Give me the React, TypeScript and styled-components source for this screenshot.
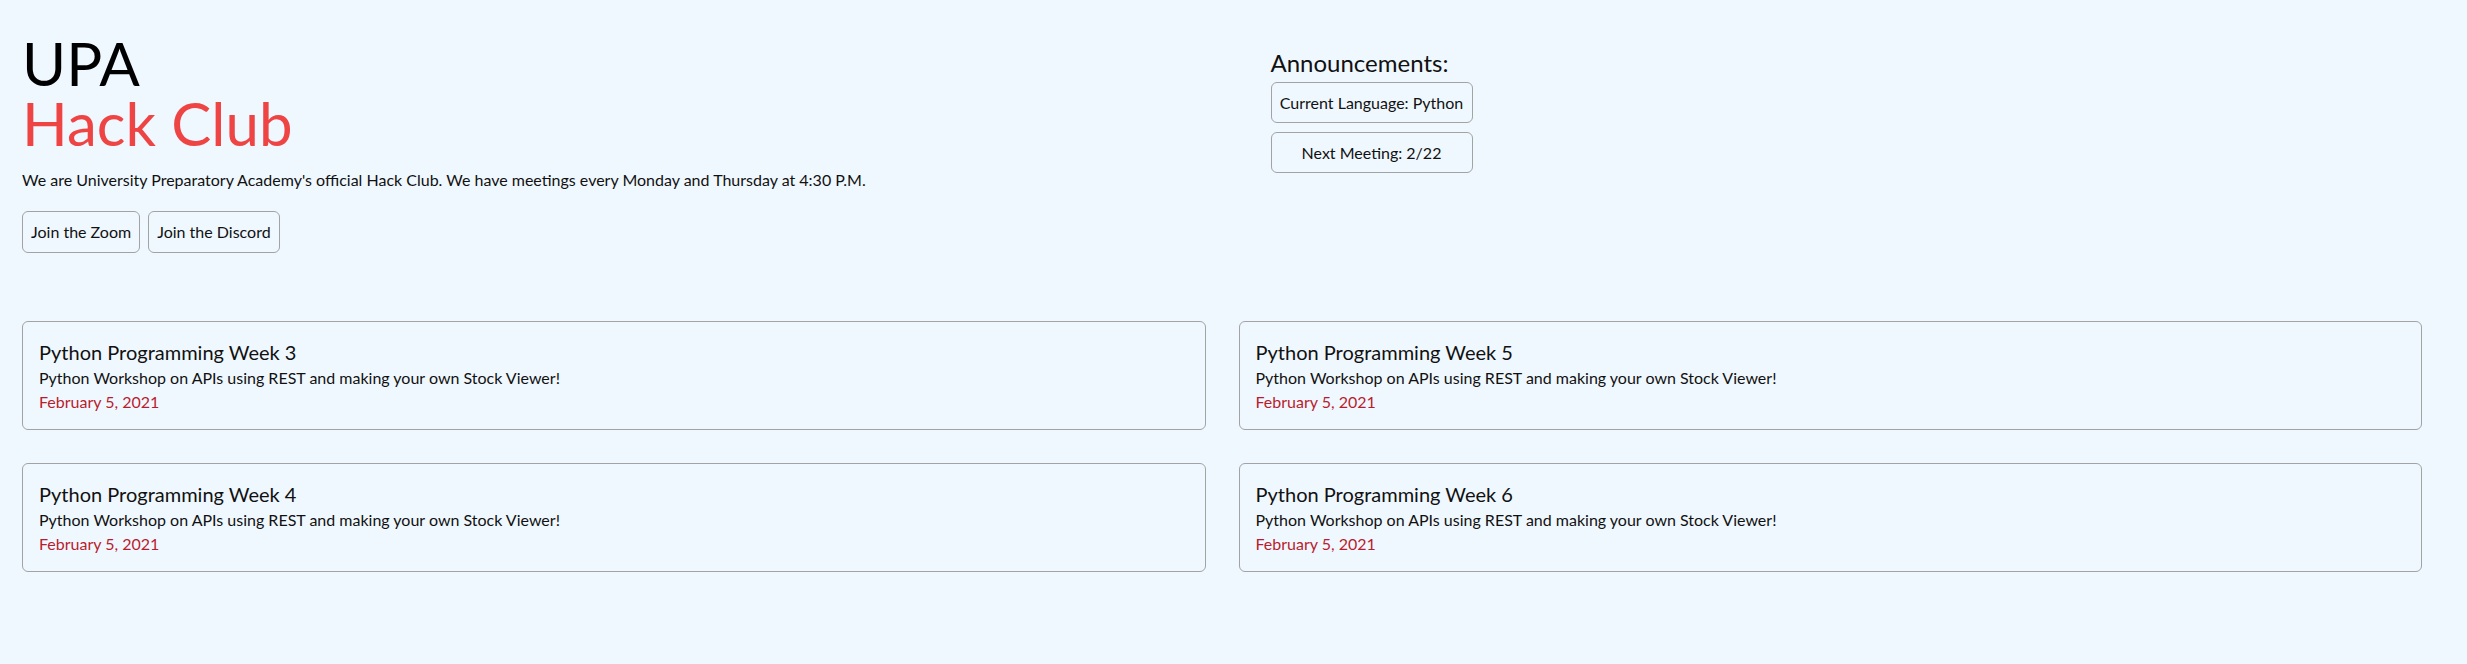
import React from "react";
import styled, { createGlobalStyle } from "styled-components";

const GlobalStyle = createGlobalStyle`
  html, body {
    margin: 0;
    padding: 0;
    background: #f0f8ff;
  }
  body {
    font-family: "Lato", "Open Sans", "Liberation Sans", sans-serif;
    color: #111;
  }
  * { box-sizing: border-box; }
`;

const Page = styled.div`
  min-height: 664px;
  background: #f0f8ff;
  padding: 33px 45px 40px 22px;
`;

const Top = styled.section`
  display: grid;
  grid-template-columns: 1fr 1fr;
  column-gap: 33px;
  align-items: start;
`;

const Intro = styled.div`
  display: flex;
  flex-direction: column;
  align-items: flex-start;
`;

const Title = styled.h1`
  margin: 0;
  font-size: 60px;
  line-height: 60px;
  font-weight: 400;
  color: #000;
  display: flex;
  flex-direction: column;
`;

const Accent = styled.span`
  color: #ef4444;
`;

const Lead = styled.p`
  margin: 15px 0 0;
  font-size: 16px;
  line-height: 24px;
`;

const ButtonRow = styled.div`
  display: flex;
  gap: 8px;
  margin-top: 19px;
`;

const OutlineButton = styled.button<{ $width?: number }>`
  font-family: inherit;
  font-size: 16px;
  line-height: 24px;
  color: #111;
  background: transparent;
  border: 1px solid #a3a3a3;
  border-radius: 6px;
  padding: 8px 8px;
  width: ${(p) => (p.$width ? `${p.$width}px` : "auto")};
  text-align: center;
  cursor: pointer;
`;

const Announcements = styled.aside`
  display: flex;
  flex-direction: column;
  align-items: flex-start;
  padding-left: 32px;
  margin-top: 14px;
`;

const AnnTitle = styled.h2`
  margin: 0;
  font-size: 24px;
  line-height: 32px;
  font-weight: 400;
`;

const AnnList = styled.div`
  display: flex;
  flex-direction: column;
  gap: 9px;
  margin-top: 3px;
`;

const AnnBox = styled(OutlineButton)`
  padding: 8px 8px 7px;
`;

const Cards = styled.section`
  display: grid;
  grid-template-columns: 1fr 1fr;
  grid-auto-flow: column;
  grid-template-rows: auto auto;
  gap: 33px;
  margin-top: 68px;
`;

const Card = styled.article`
  border: 1px solid #a3a3a3;
  border-radius: 6px;
  padding: 16px 16px 15px;
  display: flex;
  flex-direction: column;
`;

const CardTitle = styled.h3`
  margin: 0;
  font-size: 20px;
  line-height: 28px;
  font-weight: 400;
`;

const CardText = styled.p`
  margin: 0;
  font-size: 16px;
  line-height: 24px;
`;

const CardDate = styled.span`
  font-size: 16px;
  line-height: 24px;
  color: #b91c2c;
`;

const events = [
  { week: 3 },
  { week: 4 },
  { week: 5 },
  { week: 6 },
];

export default function App() {
  return (
    <>
      <GlobalStyle />
      <Page>
        <Top>
          <Intro>
            <Title>
              <span>UPA</span>
              <Accent>Hack Club</Accent>
            </Title>
            <Lead>
              We are University Preparatory Academy's official Hack Club. We have meetings every Monday and Thursday at 4:30 P.M.
            </Lead>
            <ButtonRow>
              <OutlineButton>Join the Zoom</OutlineButton>
              <OutlineButton>Join the Discord</OutlineButton>
            </ButtonRow>
          </Intro>
          <Announcements>
            <AnnTitle>Announcements:</AnnTitle>
            <AnnList>
              <AnnBox $width={202}>Current Language: Python</AnnBox>
              <AnnBox $width={202}>Next Meeting: 2/22</AnnBox>
            </AnnList>
          </Announcements>
        </Top>
        <Cards>
          {events.map((e) => (
            <Card key={e.week}>
              <CardTitle>Python Programming Week {e.week}</CardTitle>
              <CardText>Python Workshop on APIs using REST and making your own Stock Viewer!</CardText>
              <CardDate>February 5, 2021</CardDate>
            </Card>
          ))}
        </Cards>
      </Page>
    </>
  );
}
